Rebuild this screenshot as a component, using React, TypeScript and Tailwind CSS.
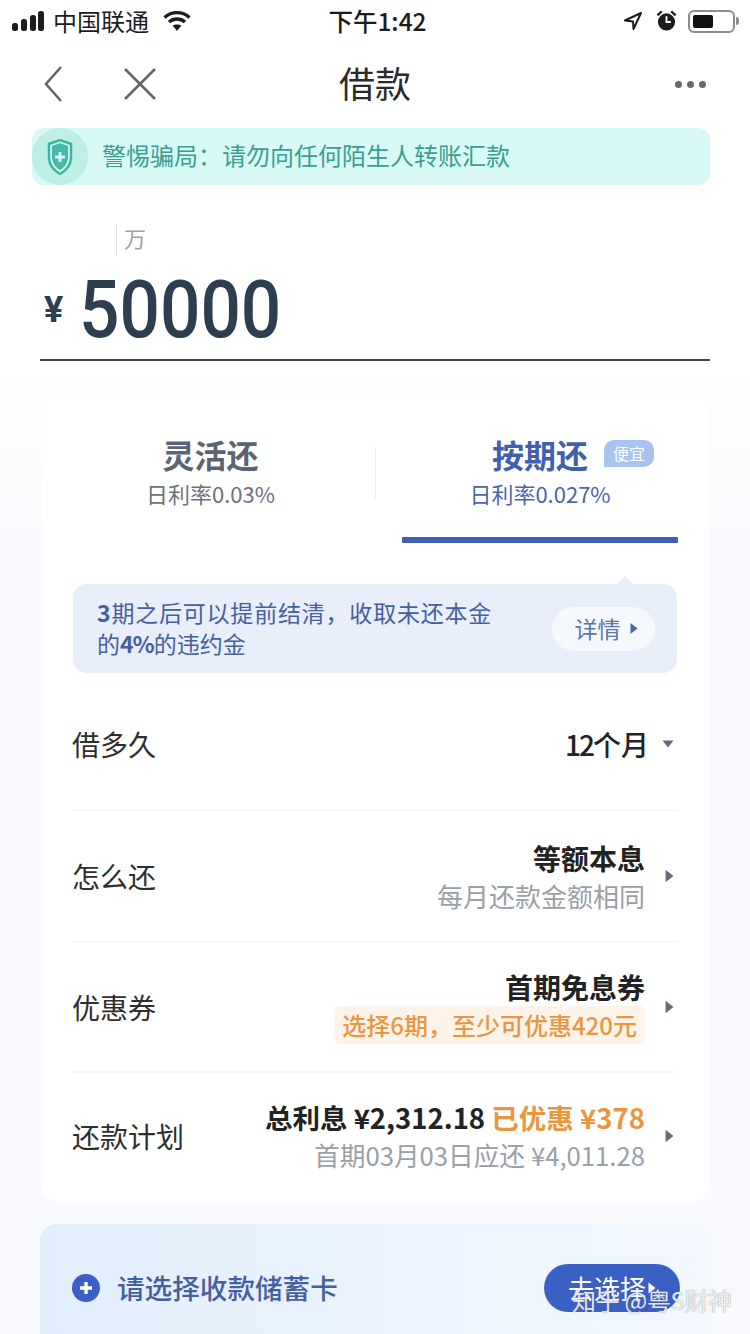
const cjk = { fontFamily: '"Noto Sans CJK SC", sans-serif' };

function Triangle({ className }: { className: string }) {
  return (
    <svg viewBox="0 0 8 12" className={className} fill="currentColor">
      <path d="M0.5 0.5 L7.5 6 L0.5 11.5 Z" />
    </svg>
  );
}

function StatusBar() {
  return (
    <div className="h-[42px] flex items-center justify-between pl-[12px] pr-[11px] text-[#1c1c1c]">
      <div className="w-[260px] flex items-center">
        <svg width="34" height="22" viewBox="0 0 34 22" fill="currentColor">
          <rect x="0" y="13" width="6" height="8" rx="2.5" />
          <rect x="9" y="9" width="6" height="12" rx="2.5" />
          <rect x="18" y="5" width="6" height="16" rx="2.5" />
          <rect x="26" y="1" width="6" height="20" rx="2.5" />
        </svg>
        <span className="ml-[7px] text-[24px] leading-none">中国联通</span>
        <svg width="28" height="22" viewBox="0 0 28 22" className="ml-[14px]" fill="none" stroke="currentColor" strokeWidth="3.4">
          <path d="M1.5 7.5 C8.5 1 19.5 1 26.5 7.5" />
          <path d="M6 12 C10.5 8 17.5 8 22 12" />
          <path d="M14 21 L9.5 15.6 C12 14 16 14 18.5 15.6 Z" fill="currentColor" stroke="none" />
        </svg>
      </div>
      <span className="ml-[4px] text-[24.5px] leading-none font-medium">下午1:42</span>
      <div className="w-[260px] flex items-center justify-end">
        <svg width="20" height="20" viewBox="0 0 20 20" fill="none" stroke="currentColor" strokeWidth="2" strokeLinejoin="round">
          <path d="M18 2 L2 9.5 L10 10.5 L10.5 18 Z" />
        </svg>
        <svg width="21" height="24" viewBox="0 0 22 24" className="ml-[13px]" fill="currentColor">
          <circle cx="11" cy="13" r="9" />
          <path d="M11 7 V13 H15.5" stroke="#fff" strokeWidth="2" fill="none" />
          <path d="M1.5 6 L6 2 M20.5 6 L16 2" stroke="currentColor" strokeWidth="2.5" />
        </svg>
        <div className="ml-[11px] w-[47px] h-[23px] rounded-[6px] border-2 border-[#8c8c8c] p-[3px]">
          <div className="h-full w-[20px] bg-[#111] rounded-[2px]" />
        </div>
        <div className="w-[3px] h-[8px] bg-[#8c8c8c] ml-[1px] rounded-r" />
      </div>
    </div>
  );
}

function NavBar() {
  return (
    <div className="mt-[18px] h-[48px] px-[40px] flex items-center justify-between relative">
      <div className="flex items-center gap-[59px]">
        <svg width="24" height="38" viewBox="0 0 24 38" fill="none" stroke="#666" strokeWidth="2.6">
          <path d="M21 2 L6 19 L21 36" />
        </svg>
        <svg width="34" height="34" viewBox="0 0 34 34" fill="none" stroke="#666" strokeWidth="2.6">
          <path d="M2 2 L32 32 M32 2 L2 32" />
        </svg>
      </div>
      <span className="absolute left-0 right-0 top-[-2px] text-center text-[36px] leading-[48px] text-[#2a2a2a]">借款</span>
      <div className="flex gap-[5px] pr-[4px]">
        <span className="w-[7px] h-[7px] rounded-full bg-[#6b6b6b]" />
        <span className="w-[7px] h-[7px] rounded-full bg-[#6b6b6b]" />
        <span className="w-[7px] h-[7px] rounded-full bg-[#6b6b6b]" />
      </div>
    </div>
  );
}

function Notice() {
  return (
    <div className="mt-[20px] ml-[32px] mr-[40px] h-[57px] rounded-[12px] bg-[#d8f9f6] flex items-center">
      <div className="w-[56px] h-[57px] rounded-full bg-[#bdefe6] flex items-center justify-center shrink-0">
        <svg width="24" height="36" viewBox="0 0 24 36" className="w-[28px] h-[36px]">
          <path d="M12 1 L23 5 V19 C23 27 17 32 12 35 C7 32 1 27 1 19 V5 Z" fill="#d9f7f2" stroke="#3bb5a2" strokeWidth="2.5" />
          <path d="M12 4 L20 7 V18 C20 24 16 29 12 31 C8 29 4 24 4 18 V7 Z" fill="#46b9a8" />
          <path d="M12 13 V23 M7 18 H17" stroke="#d9f7f2" strokeWidth="3" />
        </svg>
      </div>
      <span className="ml-[14px] mt-[-4px] text-[24px] leading-none text-[#3a9e95]">警惕骗局：请勿向任何陌生人转账汇款</span>
    </div>
  );
}

function Amount() {
  return (
    <div className="px-[40px]">
      <div className="mt-[39px] ml-[76px] h-[32px] border-l border-[#e4e4e4] pl-[7px] flex items-start">
        <span className="mt-[-1px] text-[22px] leading-[28px] text-[#a3a3a3]">万</span>
      </div>
      <div className="mt-[12px] h-[84px] flex items-center border-b-2 border-[#40424d] box-content pb-[7px]">
        <span className="ml-[4px] text-[36px] font-bold leading-none text-[#2c3e50]" style={{ fontFamily: 'Roboto, sans-serif' }}>¥</span>
        <span
          className="ml-[16px] text-[80px] leading-none font-medium origin-left scale-x-[0.89] text-[#2c3e50]"
          style={{ fontFamily: 'Roboto, sans-serif' }}
        >
          50000
        </span>
      </div>
    </div>
  );
}

function Tabs() {
  return (
    <div className="relative h-[146px] flex">
      <div className="w-[334px] pl-[5px] pt-[37px] flex flex-col items-center">
        <span className="text-[32px] leading-[38px] font-bold text-[#5b6474]">灵活还</span>
        <span className="mt-[7px] text-[22px] leading-[26px] text-[#6b7280]">日利率0.03%</span>
      </div>
      <div className="mt-[49px] h-[52px] w-px bg-[#e9ebef]" />
      <div className="flex-1 pr-[5px] pt-[37px] flex flex-col items-center">
        <div className="relative">
          <span className="block text-[32px] leading-[38px] font-bold text-[#3f5fb0]">按期还</span>
          <span className="absolute left-[112px] top-[5px] w-[50px] h-[27px] rounded-[10px] rounded-bl-none bg-[#a6c4ef] text-white text-[16px] leading-[27px] text-center">便宜</span>
        </div>
        <span className="mt-[7px] text-[22px] leading-[26px] text-[#4c66a8]">日利率0.027%</span>
      </div>
      <div className="absolute left-[361px] right-[31px] top-[139px] h-[6px] bg-[#3d5fb4] rounded-[1px]" />
    </div>
  );
}

function Tip() {
  return (
    <div className="relative mt-[40px] mx-[32px] h-[89px] rounded-[14px] bg-[#e8eefa] pl-[24px] pr-[22px] flex items-center justify-between">
      <span className="absolute right-[44px] top-[-8px] w-0 h-0 border-x-[8px] border-x-transparent border-b-[8px] border-b-[#e8eefa]" />
      <p className="w-[410px] mt-[-2px] text-[23px] leading-[31px] text-[#45609f]">
        <span className="tracking-[0.8px]"><b className="font-bold">3</b>期之后可以提前结清，收取未还本金</span>
        <br />
        的<b className="font-bold tracking-[-1px]">4%</b>的违约金
      </p>
      <div className="w-[103px] h-[44px] rounded-full bg-[#f5f8fc] flex items-center justify-center gap-[9px] pl-[5px]">
        <span className="text-[23px] leading-none text-[#5b75ad]">详情</span>
        <Triangle className="w-[8px] h-[13px] text-[#4a66a8]" />
      </div>
    </div>
  );
}

function Row({ label, h, children, border = true }: { label: string; h: string; children: React.ReactNode; border?: boolean }) {
  return (
    <div className={`${h} mx-[32px] flex items-center justify-between ${border ? 'border-b-2 border-[#f6f7f9]' : ''}`}>
      <span className="ml-[-1px] text-[28px] leading-none text-[#2e2e2e]">{label}</span>
      {children}
    </div>
  );
}

function RightCol({ children }: { children: React.ReactNode }) {
  return (
    <div className="flex items-center">
      <div className="flex flex-col items-end">{children}</div>
      <Triangle className="ml-[20px] mr-[3px] w-[9px] h-[14px] text-[#666b7c]" />
    </div>
  );
}

function LoanCard() {
  return (
    <div className="mt-[37px] mx-[41px] h-[803px] bg-white rounded-[16px]">
      <Tabs />
      <Tip />
      <Row label="借多久" h="h-[138px] pt-[6px]">
        <div className="flex items-center">
          <span className="text-[28px] leading-none font-medium text-[#222]">
            <span className="tracking-[-2px]">12</span>个月
          </span>
          <svg width="12" height="8" viewBox="0 0 12 8" className="ml-[13px] mr-[3px]" fill="#666b7c">
            <path d="M0.5 0.5 H11.5 L6 7.5 Z" />
          </svg>
        </div>
      </Row>
      <Row label="怎么还" h="h-[132px]">
        <RightCol>
          <span className="text-[28px] leading-[34px] font-bold text-[#222]">等额本息</span>
          <span className="mt-[5px] text-[26px] leading-[32px] text-[#9aa0a8]">每月还款金额相同</span>
        </RightCol>
      </Row>
      <Row label="优惠券" h="h-[130px]">
        <RightCol>
          <span className="text-[28px] leading-[34px] font-bold text-[#222]">首期免息券</span>
          <span className="mt-[2px] h-[38px] px-[8px] rounded-[6px] bg-[#fdf3e8] text-[24px] leading-[38px] font-medium text-[#e8963f]">选择6期，至少可优惠420元</span>
        </RightCol>
      </Row>
      <Row label="还款计划" h="h-[125px]" border={false}>
        <RightCol>
          <span className="text-[27.5px] leading-[34px] font-bold text-[#222] whitespace-nowrap">
            总利息 ¥2,312.18 <span className="text-[#e8963f]">已优惠 ¥378</span>
          </span>
          <span className="mt-[5px] text-[25.7px] leading-[32px] text-[#9aa0a8] whitespace-nowrap">首期03月03日应还 ¥4,011.28</span>
        </RightCol>
      </Row>
    </div>
  );
}

function BankCard() {
  return (
    <div className="mt-[23px] ml-[40px] mr-[38px] h-[140px] rounded-t-[16px] bg-gradient-to-r from-[#e1eefc] to-[#f3f8fe] pl-[32px] pr-[32px] pt-[40px] flex items-start justify-between">
      <div className="flex items-center h-[48px]">
        <svg width="28" height="28" viewBox="0 0 28 28">
          <circle cx="14" cy="14" r="14" fill="#3b60c4" />
          <path d="M14 8 V20 M8 14 H20" stroke="#fff" strokeWidth="3.4" />
        </svg>
        <span className="ml-[17px] text-[27.6px] leading-none font-medium text-[#45609f]">请选择收款储蓄卡</span>
      </div>
      <div className="w-[136px] h-[48px] rounded-full bg-[#3b60c4] flex items-center justify-center gap-[2px]">
        <span className="text-[26px] leading-none text-white">去选择</span>
        <Triangle className="w-[8px] h-[12px] text-white" />
      </div>
    </div>
  );
}

export default function App() {
  return (
    <div className="relative w-[750px] h-[1334px] overflow-hidden bg-gradient-to-b from-white from-[26%] to-[#f8fafd] to-[40%]" style={cjk}>
      <StatusBar />
      <NavBar />
      <Notice />
      <Amount />
      <LoanCard />
      <BankCard />
      {/* watermark */}
      <div className="absolute left-[572px] top-[1288px] text-[24px] leading-none tracking-[-0.3px] text-white/85 whitespace-nowrap [text-shadow:0_0_1px_rgba(90,90,90,0.8)]">
        知乎 @粤S财神
      </div>
    </div>
  );
}
